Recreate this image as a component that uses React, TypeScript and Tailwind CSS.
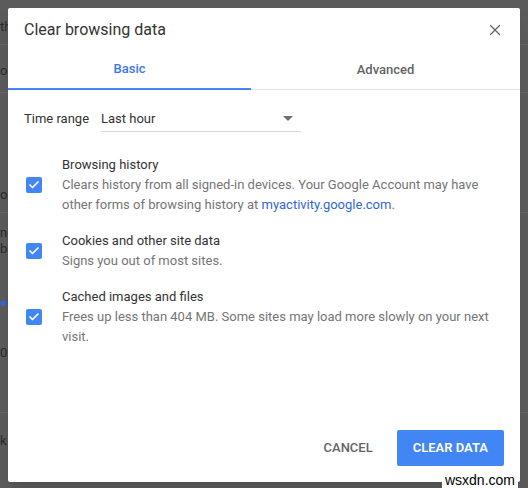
import { Check, X } from "lucide-react";

interface DataItem {
  title: string;
  desc: React.ReactNode;
}

const items: DataItem[] = [
  {
    title: "Browsing history",
    desc: (
      <>
        Clears history from all signed-in devices. Your Google Account may have
        other forms of browsing history at{" "}
        <span className="text-[#3367d6]">myactivity.google.com</span>.
      </>
    ),
  },
  { title: "Cookies and other site data", desc: "Signs you out of most sites." },
  {
    title: "Cached images and files",
    desc: "Frees up less than 404 MB. Some sites may load more slowly on your next visit.",
  },
];

const Row = ({ item }: { item: DataItem }) => (
  <div className="flex items-center">
    <div className="ml-[2px] flex size-4 shrink-0 items-center justify-center rounded-[2px] bg-[#4285f4]">
      <Check className="size-3 text-white" strokeWidth={3.5} />
    </div>
    <div className="ml-5 text-[13px] leading-5">
      <p className="text-[#333]">{item.title}</p>
      <p className="text-[#757575]">{item.desc}</p>
    </div>
  </div>
);

const App = () => {
  return (
    <div className="relative h-[488px] w-[528px] overflow-hidden bg-[#5b5b5b] font-['Roboto',sans-serif]">
      {/* page behind the dialog */}
      <div className="flex flex-col text-[13px] text-[#2a2a2a]">
        <div className="h-[45px] border-b border-[#666] pt-[17px]">th</div>
        <div className="h-[48px] border-b border-[#666] pt-[16px]">o</div>
        <div className="h-[120px] border-b border-[#666] pt-[92px]">or</div>
        <div className="h-[80px] pt-[12px] leading-[16px]">
          ne
          <br />
          ba
        </div>
        <div className="h-[50px] text-[#3367d6]">●</div>
        <div className="h-[70px] border-b border-[#666]">0</div>
        <div className="pt-[18px]">k</div>
      </div>

      {/* dialog */}
      <div className="absolute left-2 top-2 flex h-[474px] w-[512px] flex-col rounded-[2px] bg-white shadow-lg">
        <div className="flex h-[44px] items-center justify-between px-4">
          <h1 className="text-[16px] text-[#333]">Clear browsing data</h1>
          <X className="size-[18px] text-[#5f6368]" strokeWidth={1.6} />
        </div>

        <div className="flex h-[38px] border-b border-[#e0e0e0] text-[13px] font-medium">
          <div className="-mb-px flex w-[243px] items-center justify-center border-b-2 border-[#4285f4] pb-[2px] text-[#3b78e7]">
            Basic
          </div>
          <div className="flex flex-1 items-center justify-center pb-[2px] text-[#646464]">
            Advanced
          </div>
        </div>

        <div className="flex items-center px-4 pt-[16px] text-[13px] text-[#333]">
          <span className="w-[77px]">Time range</span>
          <div className="flex h-[26px] w-[200px] items-center justify-between border-b border-[#d6d6d6]">
            <span>Last hour</span>
            <svg width="10" height="5" viewBox="0 0 10 5" className="mr-[8px]">
              <path d="M0 0h10L5 5z" fill="#6f6f6f" />
            </svg>
          </div>
        </div>

        <div className="flex flex-col gap-4 px-4 pt-[23px]">
          {items.map((item) => (
            <Row key={item.title} item={item} />
          ))}
        </div>

        <div className="mt-auto flex justify-end gap-2 p-4 text-[13px]">
          <button className="h-9 px-4 font-medium text-[#646464]">CANCEL</button>
          <button className="h-9 rounded-[2px] bg-[#4285f4] px-4 font-semibold text-white">
            CLEAR DATA
          </button>
        </div>
      </div>

      <div className="absolute bottom-0 right-[10px] bg-white px-[3px] font-['Liberation_Sans',sans-serif] text-[14px] leading-[15px] text-black">
        wsxdn.com
      </div>
    </div>
  );
};

export default App;
